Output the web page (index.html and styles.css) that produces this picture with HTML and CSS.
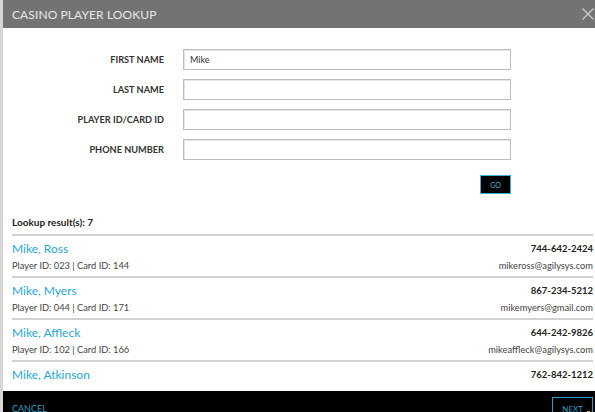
FILE: index.html
```html
<!DOCTYPE html>
<html>
<head>
<meta charset="utf-8">
<link rel="stylesheet" href="styles.css">
</head>
<body>
<div class="modal">
  <div class="header">
    <span class="title">CASINO PLAYER LOOKUP</span>
    <svg class="close" width="12" height="12" viewBox="0 0 12 12"><path d="M0.5 0.5 L11.5 11.5 M11.5 0.5 L0.5 11.5" stroke="#c8c8c8" stroke-width="1.4" fill="none"/></svg>
  </div>
  <div class="form">
    <label class="lbl">FIRST NAME</label>
    <div class="input">Mike</div>
    <label class="lbl">LAST NAME</label>
    <div class="input"></div>
    <label class="lbl">PLAYER ID/CARD ID</label>
    <div class="input"></div>
    <label class="lbl">PHONE NUMBER</label>
    <div class="input"></div>
    <div class="go-cell"><button class="go">GO</button></div>
  </div>
  <div class="count">Lookup result(s): 7</div>
  <div class="results">
    <div class="row">
      <div class="left"><div class="name">Mike, Ross</div><div class="sub">Player ID: 023 | Card ID: 144</div></div>
      <div class="right"><div class="phone">744-642-2424</div><div class="sub">mikeross@agilysys.com</div></div>
    </div>
    <div class="row">
      <div class="left"><div class="name">Mike, Myers</div><div class="sub">Player ID: 044 | Card ID: 171</div></div>
      <div class="right"><div class="phone">867-234-5212</div><div class="sub">mikemyers@gmail.com</div></div>
    </div>
    <div class="row">
      <div class="left"><div class="name">Mike, Affleck</div><div class="sub">Player ID: 102 | Card ID: 166</div></div>
      <div class="right"><div class="phone">644-242-9826</div><div class="sub">mikeaffleck@agilysys.com</div></div>
    </div>
    <div class="row">
      <div class="left"><div class="name">Mike, Atkinson</div></div>
      <div class="right"><div class="phone">762-842-1212</div></div>
    </div>
  </div>
  <div class="footer">
    <span class="cancel">CANCEL</span>
    <span class="next">NEXT<span class="dot"></span></span>
  </div>
</div>
</body>
</html>
```
FILE: styles.css
```css
html, body {
  margin: 0;
  padding: 0;
}
body {
  width: 595px;
  height: 412px;
  overflow: hidden;
  background: #d6d6d6;
  font-family: Lato, "Open Sans", sans-serif;
}
.modal {
  margin-left: 3px;
  background: #fff;
  display: flex;
  flex-direction: column;
}
.header {
  flex: 0 0 28px;
  height: 28px;
  background: #737373;
  display: flex;
  align-items: center;
  justify-content: space-between;
  padding: 0 1px 0 9px;
}
.title {
  color: #e8e8e8;
  font-size: 12px;
  letter-spacing: 0.1px;
}
.form {
  display: grid;
  grid-template-columns: 161px 328px;
  grid-auto-rows: 21px;
  column-gap: 19px;
  row-gap: 9px;
  padding-top: 21px;
}
.lbl {
  font-size: 9.2px;
  font-weight: 700;
  color: #333;
  text-align: right;
  line-height: 21px;
}
.input {
  border: 1px solid #bdbdbd;
  box-sizing: border-box;
  height: 21px;
  font-size: 9px;
  color: #333;
  line-height: 19px;
  padding-left: 6px;
  box-shadow: inset 1px 1px 0 #e6e6e6;
}
.go-cell {
  grid-column: 2;
  display: flex;
  justify-content: flex-end;
  margin-top: 6px;
  height: 19px;
}
.go {
  width: 31px;
  height: 19px;
  background: #000;
  border: 1px solid #38b3d6;
  color: #4fb8d4;
  font-family: Lato, sans-serif;
  font-size: 7px;
  padding: 0;
}
.count {
  margin-top: 26px;
  padding-left: 9px;
  font-size: 10px;
  font-weight: 700;
  color: #222;
  height: 18px;
}
.results {
  height: 157px;
  overflow: hidden;
  padding-right: 2px;
}
.row {
  border-top: 2px solid #d2d2d2;
  margin-left: 9px;
  display: flex;
  justify-content: space-between;
  padding: 5px 0 4px 0;
  height: 31px;
}
.name {
  color: #29a8d4;
  font-size: 12px;
  line-height: 16px;
}
.phone {
  color: #222;
  font-size: 9.5px;
  font-weight: 700;
  line-height: 16px;
  text-align: right;
}
.sub {
  color: #444;
  font-size: 9.3px;
  line-height: 17px;
}
.right .sub {
  text-align: right;
}
.footer {
  flex: 0 0 40px;
  height: 40px;
  background: #000;
  display: flex;
  justify-content: space-between;
  align-items: flex-start;
  padding: 6px 2px 0 9px;
  box-sizing: border-box;
}
.cancel {
  color: #2b9cc0;
  font-size: 9px;
  margin-top: 6px;
}
.next {
  position: relative;
  border: 1px solid #2b9cc0;
  color: #2b9cc0;
  font-size: 8px;
  padding: 6px 9px 8px 9px;
}
.dot {
  position: absolute;
  right: 2px;
  bottom: 9px;
  width: 3px;
  height: 2px;
  background: #e0a020;
}
```
